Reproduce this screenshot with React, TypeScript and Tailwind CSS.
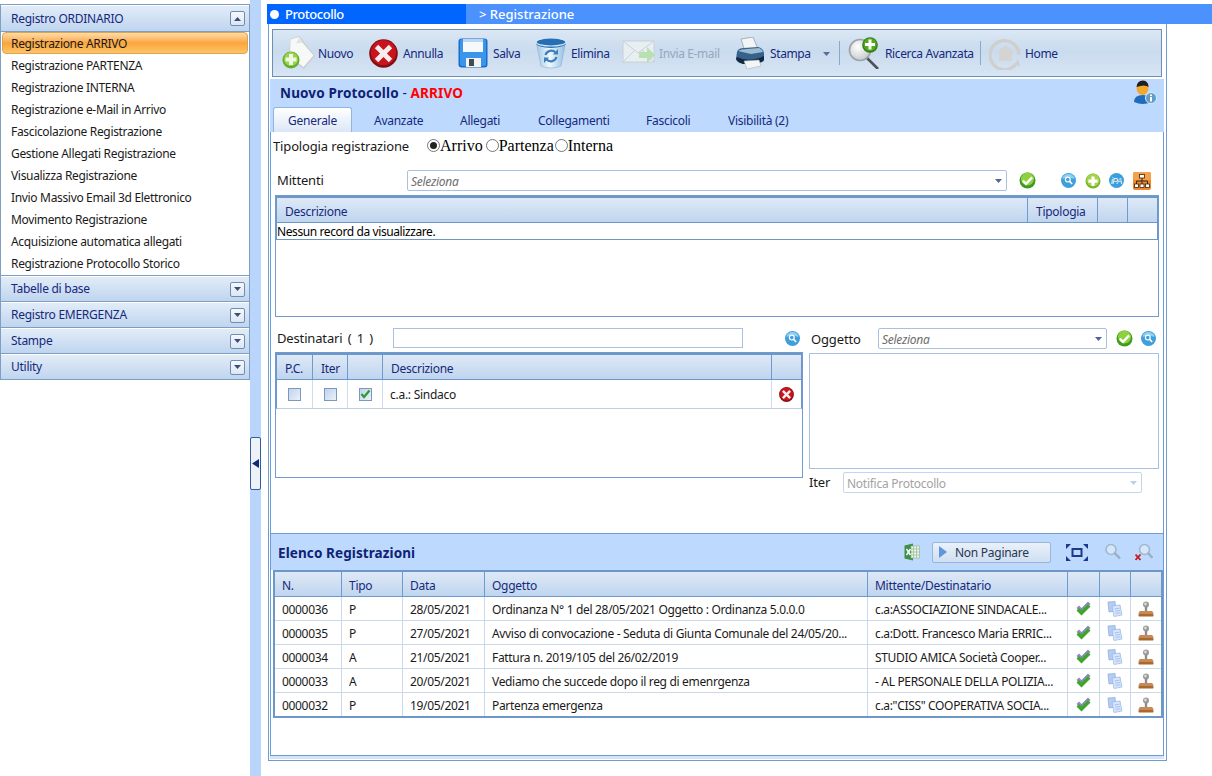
import React from "react";

const NAVY = "text-[#15297c]";
const LABEL = "text-[13px] tracking-[-0.15px] text-[#1a1a1a]";

function Caret({ up = false, color = "#4a5a90", small = false }: { up?: boolean; color?: string; small?: boolean }) {
  return (
    <svg width={small ? 7 : 9} height={small ? 4 : 5} viewBox="0 0 9 5" className="shrink-0">
      <path d={up ? "M0 5 L4.5 0 L9 5Z" : "M0 0 H9 L4.5 5Z"} fill={color} />
    </svg>
  );
}

function NuovoIcon() {
  return (
    <svg width="34" height="34" viewBox="0 0 34 34">
      <path d="M9 3 L19 0 L23 6 L34 20 L23 33 L8 23Z" fill="#c9ced2" />
      <path d="M9.5 3.5 L18.5 1 L21.5 6.5 L32.5 19.5 L22.5 31 L9 21Z" fill="#f7f8f8" />
      <path d="M18.5 1 L21.5 6.5 L15 7.5Z" fill="#dfe3e6" />
      <circle cx="10" cy="24" r="8.5" fill="#5fae28" />
      <circle cx="10" cy="23" r="7" fill="#98d24c" />
      <path d="M8 18 h4 v3.5 h3.5 v4 h-3.5 v3.5 h-4 v-3.5 h-3.5 v-4 h3.5z" fill="#eef8e2" />
    </svg>
  );
}
function CancelIcon({ size = 29 }: { size?: number }) {
  return (
    <svg width={size} height={size} viewBox="0 0 30 30">
      <circle cx="15" cy="15" r="14.8" fill="#850e14" />
      <circle cx="15" cy="14" r="13" fill="#c8141c" />
      <path d="M9.5 6 L15 11.5 L20.5 6 L24 9.5 L18.5 15 L24 20.5 L20.5 24 L15 18.5 L9.5 24 L6 20.5 L11.5 15 L6 9.5Z" fill="#f6eeee" />
    </svg>
  );
}
function SaveIcon() {
  return (
    <svg width="30" height="30" viewBox="0 0 30 30">
      <rect x="0.5" y="0.5" width="29" height="29" rx="3" fill="#1a6cc9" />
      <rect x="2" y="1" width="26" height="27" rx="2" fill="#3b95ea" />
      <rect x="5" y="1" width="20" height="13" fill="#f6f9fc" />
      <rect x="5" y="1" width="20" height="3" fill="#bcd6ef" />
      <rect x="8" y="20" width="15" height="9" fill="#f3f4f5" />
      <rect x="11" y="21" width="5" height="7" fill="#454b52" />
    </svg>
  );
}
function BinIcon() {
  return (
    <svg width="32" height="32" viewBox="0 0 32 32">
      <defs>
        <linearGradient id="binb" x1="0" x2="1" y1="0" y2="0">
          <stop offset="0" stopColor="#9cc6e8" />
          <stop offset="0.45" stopColor="#f2f8fc" />
          <stop offset="1" stopColor="#8dbde4" />
        </linearGradient>
      </defs>
      <path d="M1.5 6 L30.5 6 L26 29 Q16 33 6 29Z" fill="url(#binb)" stroke="#8fb6d4" strokeWidth="0.7" />
      <ellipse cx="16" cy="6" rx="15" ry="5" fill="#276fb4" />
      <ellipse cx="16" cy="5" rx="15" ry="4" fill="none" stroke="#d8e9f5" strokeWidth="1.2" />
      <path d="M10.5 18 A6 6 0 0 1 20.5 15.5 M21.5 20 A6 6 0 0 1 11.5 22.5" fill="none" stroke="#3a80be" strokeWidth="2.2" />
      <path d="M23 12 V17.5 H18Z M9 26 V20.5 H14Z" fill="#3a80be" />
    </svg>
  );
}
function MailIcon() {
  return (
    <svg width="34" height="26" viewBox="0 0 34 26">
      <rect x="1" y="1" width="31" height="21" fill="#e8eff3" stroke="#c8d0d3" />
      <path d="M1 1 L16 13 L32 1 M1 22 L13 10 M32 22 L20 10" fill="none" stroke="#c9d2d6" />
      <path d="M17 12 H25 V7 L33 15 L25 23 V18 H17Z" fill="#b8e0b0" />
    </svg>
  );
}
function PrinterIcon() {
  return (
    <svg width="30" height="32" viewBox="0 0 30 32">
      <path d="M6 2 L18 0 L23 12 L10 14Z" fill="#f2f4f6" stroke="#8d99a5" strokeWidth="0.7" />
      <path d="M2 15 Q3 11 9 11 L23 10 Q28 11 29 16 L29 23 Q28 26 22 26 L8 26 Q2 26 1 22Z" fill="#35618a" />
      <path d="M3 14 Q6 12 12 12 L24 11 Q27 12 28 15 L16 17Z" fill="#9dbcd2" />
      <path d="M2 20 Q14 26 29 19 L29 23 Q26 27 8 27 Q3 26 1 22Z" fill="#12293f" />
      <path d="M9 24 L24 23 L26 29 L12 32Z" fill="#f3f5f6" stroke="#aab3bb" strokeWidth="0.6" />
    </svg>
  );
}
function SearchPlusIcon() {
  return (
    <svg width="34" height="32" viewBox="0 0 34 32">
      <defs>
        <radialGradient id="lens" cx="0.4" cy="0.35" r="0.7">
          <stop offset="0" stopColor="#ffffff" />
          <stop offset="1" stopColor="#c4c8ca" />
        </radialGradient>
      </defs>
      <path d="M19 21 L30 32" stroke="#4c5257" strokeWidth="2.6" />
      <circle cx="12" cy="13" r="10.5" fill="url(#lens)" stroke="#9da3a7" strokeWidth="1.6" />
      <circle cx="22" cy="8" r="7.8" fill="#2e7d12" />
      <circle cx="22" cy="7.5" r="6.6" fill="#53a81f" />
      <path d="M20.5 2.5 h3 v3.5 h3.5 v3 h-3.5 v3.5 h-3 v-3.5 h-3.5 v-3 h3.5z" fill="#fff" />
    </svg>
  );
}
function HomeIcon() {
  return (
    <svg width="33" height="33" viewBox="0 0 33 33">
      <path d="M27 27 A14.5 14.5 0 1 1 30 18" fill="none" stroke="#cfcfcd" strokeWidth="3.4" />
      <path d="M25 28 L31 29 L29 22Z" fill="#cfcfcd" />
      <path d="M16.5 8 L26 16 H23 V24 H10 V16 H7Z" fill="#d4d4d2" />
    </svg>
  );
}
function UserInfoIcon() {
  return (
    <svg width="24" height="25" viewBox="0 0 24 25">
      <path d="M1 22 Q1 15 10 15 Q18 15 18 22 Q10 26 1 22Z" fill="#1f6bbd" />
      <ellipse cx="9.5" cy="8" rx="6" ry="7" fill="#f0a92c" />
      <path d="M3.5 7 Q4 0.5 10 0.5 Q15.5 1 15.5 7 Q12 4 3.5 7Z" fill="#202020" />
      <circle cx="18" cy="18" r="5.5" fill="#5f9ecb" stroke="#dfeaf3" />
      <rect x="17" y="17" width="2" height="4.5" fill="#fff" />
      <rect x="17" y="14.5" width="2" height="1.6" fill="#fff" />
    </svg>
  );
}
function OkIcon() {
  return (
    <svg width="17" height="17" viewBox="0 0 17 17">
      <circle cx="8.5" cy="8.5" r="8" fill="#3f9c1f" />
      <circle cx="8.5" cy="7" r="6.5" fill="#8ed13e" />
      <path d="M3.8 8.6 L7 11.8 L13.2 5.4" fill="none" stroke="#fff" strokeWidth="2.4" />
    </svg>
  );
}
function MiniSearch() {
  return (
    <svg width="15" height="15" viewBox="0 0 15 15">
      <circle cx="7.5" cy="7.5" r="7.5" fill="#3f9fdd" />
      <path d="M1.5 6 A6 5 0 0 1 13.5 6 Q7 3.5 1.5 6Z" fill="#8fd0f2" />
      <circle cx="6.8" cy="6.6" r="2.4" fill="#3f9fdd" stroke="#fff" strokeWidth="1.2" />
      <path d="M8.6 8.4 L11.2 11" stroke="#fff" strokeWidth="1.5" />
    </svg>
  );
}
function MiniAdd() {
  return (
    <svg width="16" height="16" viewBox="0 0 16 16">
      <circle cx="8" cy="8" r="7.5" fill="#7ab32b" />
      <circle cx="8" cy="7" r="6.5" fill="#a5d24c" />
      <path d="M6.4 3.5 h3.2 v3 h3 v3.2 h-3 v3 h-3.2 v-3 h-3 v-3.2 h3z" fill="#fff" />
    </svg>
  );
}
function MiniIpa() {
  return (
    <svg width="15" height="15" viewBox="0 0 15 15">
      <circle cx="7.5" cy="7.5" r="7.5" fill="#3b9fdc" />
      <text x="7.5" y="10.5" textAnchor="middle" fontSize="8.5" fontStyle="italic" letterSpacing="-0.5" fill="#fff" fontFamily="'Liberation Sans',sans-serif">iPA</text>
    </svg>
  );
}
function OrgIcon() {
  return (
    <svg width="18" height="18" viewBox="0 0 18 18">
      <rect width="18" height="18" rx="2" fill="#ef8a2c" />
      <rect width="18" height="8" rx="2" fill="#f5a04a" />
      <path d="M9 6 V9 M3.5 12 V9 H14.5 V12 M9 9 V12" fill="none" stroke="#3a2410" />
      <rect x="6.5" y="2.5" width="5" height="3.5" fill="#fff" stroke="#3a2410" strokeWidth="0.8" />
      <rect x="1.5" y="12" width="4" height="3.5" fill="#fff" stroke="#3a2410" strokeWidth="0.8" />
      <rect x="7" y="12" width="4" height="3.5" fill="#fff" stroke="#3a2410" strokeWidth="0.8" />
      <rect x="12.5" y="12" width="4" height="3.5" fill="#fff" stroke="#3a2410" strokeWidth="0.8" />
    </svg>
  );
}
function DoubleTick() {
  return (
    <svg width="15" height="15" viewBox="0 0 15 15">
      <path d="M0.5 7 L3 4.5 L5.5 7 L12 0.5 L14.5 3 L5.5 12Z" fill="#8b8bc2" />
      <path d="M0.5 9.5 L3 7 L5.5 9.5 L12 3 L14.5 5.5 L5.5 14.5Z" fill="#3fa52c" />
    </svg>
  );
}
function PagesIcon() {
  return (
    <svg width="16" height="16" viewBox="0 0 16 16">
      <path d="M1 1 L8 0.5 L9 10 L2 11Z" fill="#b5cdf4" stroke="#86a8e2" strokeWidth="0.7" />
      <path d="M5 5 L13 4 L15 14 L7 15.5Z" fill="#d8e5fb" stroke="#93b3e8" strokeWidth="0.7" />
      <path d="M7.5 8 L12.5 7.2 M8 10.3 L13 9.5 M8.4 12.5 L13.4 11.8" stroke="#9bb8ea" strokeWidth="0.8" />
    </svg>
  );
}
function StampIcon() {
  return (
    <svg width="16" height="16" viewBox="0 0 16 16">
      <circle cx="8" cy="3.5" r="3" fill="#9a9a9a" />
      <circle cx="7.5" cy="3" r="1.4" fill="#d6d6d6" />
      <rect x="6.8" y="5.5" width="2.4" height="4.5" fill="#8d8d8d" />
      <path d="M2 10 H14 Q15.5 11 15.5 13 H0.5 Q0.5 11 2 10Z" fill="#c88a52" />
      <rect x="0.5" y="13" width="15" height="2.5" rx="0.8" fill="#a9682f" />
    </svg>
  );
}
function ExcelIcon() {
  return (
    <svg width="16" height="18" viewBox="0 0 16 18">
      <path d="M0.5 2.5 L9 0.5 V17.5 L0.5 15.5Z" fill="#3f8f4a" />
      <rect x="7" y="3" width="8.5" height="12" fill="#e7f1e4" stroke="#8ab58c" strokeWidth="0.6" />
      <path d="M9.5 3 V15 M12.5 3 V15 M7 6 H15.5 M7 9 H15.5 M7 12 H15.5" stroke="#8ab58c" strokeWidth="0.6" />
      <path d="M2.5 6 L6.5 12 M6.5 6 L2.5 12" stroke="#fff" strokeWidth="1.4" />
    </svg>
  );
}
function FitIcon() {
  return (
    <svg width="22" height="17" viewBox="0 0 22 17">
      <rect x="6.5" y="5" width="9" height="7" fill="none" stroke="#1d3a8a" strokeWidth="2" />
      <path d="M0 5 V0 H5Z M22 5 V0 H17Z M0 12 V17 H5Z M22 12 V17 H17Z" fill="#1d3a8a" />
    </svg>
  );
}
function GreySearch({ x = false }: { x?: boolean }) {
  return (
    <svg width="18" height="18" viewBox="0 0 18 18">
      <circle cx={x ? 9.5 : 7} cy="6.5" r="5" fill="#d7e6f6" stroke="#9db8d2" strokeWidth="1.6" />
      <path d={x ? "M13 10 L17.5 15" : "M10.5 10 L16 15.5"} stroke="#96aec6" strokeWidth="2.4" />
      {x && <path d="M0.5 11.5 L5.5 17 M5.5 11.5 L0.5 17" stroke="#c8151d" strokeWidth="1.8" />}
    </svg>
  );
}

function Accordion({ label, up = false, tall = false }: { label: string; up?: boolean; tall?: boolean }) {
  return (
    <div
      className={`flex items-center justify-between pl-[10px] pr-[4px] border-b border-b-[#7f9fc2] border-t border-t-white bg-gradient-to-b from-[#e2ecf8] to-[#bfd5ef] ${
        tall ? "h-[27px]" : "h-[26px]"
      }`}
    >
      <span className={NAVY}>{label}</span>
      <span className="flex h-[15px] w-[15px] items-center justify-center rounded-[2px] border border-[#6f8db0] bg-gradient-to-b from-[#f6f9fd] to-[#dbe6f4]">
        <Caret up={up} color="#3d4f78" small />
      </span>
    </div>
  );
}

const menu = [
  "Registrazione ARRIVO",
  "Registrazione PARTENZA",
  "Registrazione INTERNA",
  "Registrazione e-Mail in Arrivo",
  "Fascicolazione Registrazione",
  "Gestione Allegati Registrazione",
  "Visualizza Registrazione",
  "Invio Massivo Email 3d Elettronico",
  "Movimento Registrazione",
  "Acquisizione automatica allegati",
  "Registrazione Protocollo Storico",
];

function Sidebar() {
  return (
    <aside className="w-[250px] shrink-0 pt-[4px]">
      <div className="border border-[#7f9fc2]">
        <Accordion label="Registro ORDINARIO" up tall />
        <div className="h-[244px] border-b border-[#7f9fc2] bg-white tracking-[-0.33px]">
          {menu.map((m, i) => (
            <div
              key={m}
              className={
                i === 0
                  ? "mx-[1px] flex h-[22px] items-center rounded-[4px] border border-[#dba64a] bg-gradient-to-b from-[#fddcaa] via-[#fba53a] to-[#fcc468] pl-[8px] pt-[2px] text-[#1a1a1a]"
                  : "flex h-[22px] items-center pl-[10px] pt-[2px] text-[#1a1a1a]"
              }
            >
              {m}
            </div>
          ))}
        </div>
        <Accordion label="Tabelle di base" />
        <Accordion label="Registro EMERGENZA" />
        <Accordion label="Stampe" />
        <div className="-mb-[1px]">
          <Accordion label="Utility" />
        </div>
      </div>
    </aside>
  );
}

function Splitter() {
  return (
    <div className="relative h-full w-[11px] shrink-0 bg-[#b9d5fc]">
      <div className="absolute left-0 top-[437px] flex h-[53px] w-[11px] items-center rounded-[2px] border border-[#2b5f9e] bg-[#eef2f8]">
        <svg width="7" height="9" viewBox="0 0 7 9" className="ml-[1px]">
          <path d="M7 0 V9 L0 4.5Z" fill="#0d2a78" />
        </svg>
      </div>
    </div>
  );
}

const tools = [
  { t: "Nuovo", w: "w-[85px]", i: <NuovoIcon /> },
  { t: "Annulla", w: "w-[90px]", i: <CancelIcon /> },
  { t: "Salva", w: "w-[78px]", i: <SaveIcon /> },
  { t: "Elimina", w: "w-[88px]", i: <BinIcon /> },
  { t: "Invia E-mail", w: "w-[111px]", i: <MailIcon />, off: true },
];

function Tool({ icon, text, off, w }: { icon: React.ReactNode; text: string; off?: boolean; w: string }) {
  return (
    <div className={`flex items-center ${w}`}>
      <span className="mr-[3px] flex w-[34px] justify-center">{icon}</span>
      <span className={`whitespace-nowrap pt-[2px] tracking-[-0.38px] ${off ? "text-[#98a6bd]" : NAVY}`}>{text}</span>
    </div>
  );
}

function Toolbar() {
  return (
    <div className="mx-[2px] mt-[5px] flex h-[48px] items-center border border-[#6e8fb5] bg-gradient-to-b from-[#dbe7f4] via-[#c9dbee] via-45% to-[#d7e5f4] pl-[8px]">
      {tools.map((t) => (
        <Tool key={t.t} icon={t.i} text={t.t} off={t.off} w={t.w} />
      ))}
      <div className="flex w-[106px] items-center">
        <span className="mr-[3px] flex w-[34px] justify-center">
          <PrinterIcon />
        </span>
        <span className={`pt-[2px] tracking-[-0.38px] ${NAVY}`}>Stampa</span>
        <span className="ml-[12px] pt-[2px]">
          <Caret color="#5a6a9c" small />
        </span>
      </div>
      <div className="mr-[8px] h-[24px] w-px bg-[#86a9cf]" />
      <Tool icon={<SearchPlusIcon />} text="Ricerca Avanzata" w="w-[132px]" />
      <div className="mr-[7px] h-[24px] w-px bg-[#86a9cf]" />
      <Tool icon={<HomeIcon />} text="Home" w="w-[80px]" />
    </div>
  );
}

const tabs = [
  { t: "Avanzate", w: "w-[86px]" },
  { t: "Allegati", w: "w-[78px]" },
  { t: "Collegamenti", w: "w-[108px]" },
  { t: "Fascicoli", w: "w-[82px]" },
  { t: "Visibilità (2)", w: "w-[100px]" },
];

function PanelHead() {
  return (
    <div className="mt-[2px] h-[53px] bg-[#bed9fe]">
      <div className="flex h-[28px] items-center justify-between pl-[10px] pr-[7px]">
        <h1 className="text-[13.5px] font-bold tracking-[0.15px] text-[#0f2274]">
          Nuovo Protocollo <span className="font-normal">-</span> <span className="text-[#ff0000]">ARRIVO</span>
        </h1>
        <span className="-mt-[2px]">
          <UserInfoIcon />
        </span>
      </div>
      <div className="flex h-[25px] pl-[3px]">
        <div className={`mr-[7px] flex h-[25px] w-[79px] items-center justify-center rounded-t-[3px] border-x border-t border-[#92b4de] bg-gradient-to-b from-[#ffffff] to-[#dbe7f6] pt-[2px] ${NAVY}`}>
          Generale
        </div>
        {tabs.map((t) => (
          <div key={t.t} className={`flex h-[25px] items-center whitespace-nowrap pl-[15px] pt-[2px] ${t.w} ${NAVY}`}>
            {t.t}
          </div>
        ))}
      </div>
    </div>
  );
}

function Radio({ on = false, label, cls = "" }: { on?: boolean; label: string; cls?: string }) {
  return (
    <span className={`flex items-center ${cls}`}>
      <span className="flex h-[13px] w-[13px] items-center justify-center rounded-full border border-[#767676] bg-white">
        {on && <span className="h-[7px] w-[7px] rounded-full bg-[#222]" />}
      </span>
      <span className="font-['Liberation_Serif',serif] text-[16px] leading-[18px] tracking-normal text-black">{label}</span>
    </span>
  );
}

function Combo({ w, text, off }: { w: string; text: string; off?: boolean }) {
  return (
    <div className={`flex h-[21px] items-center justify-between rounded-[2px] border bg-white pl-[3px] pr-[4px] ${off ? "border-[#c6d6ea]" : "border-[#a9c1e0]"} ${w}`}>
      <span className={`pt-[2px] ${off ? "text-[#a3a3a3]" : "italic text-[#6d6d6d]"}`}>{text}</span>
      <Caret color={off ? "#bfcfe3" : "#5363a0"} small />
    </div>
  );
}

function Hd({ children, cls = "" }: { children?: React.ReactNode; cls?: string }) {
  return <div className={`flex items-center border-r border-[#6d9ad0] pl-[8px] pt-[3px] ${NAVY} ${cls}`}>{children}</div>;
}

function MittentiTable() {
  return (
    <div className="mx-[4px] mt-[4px] h-[122px] border border-[#6f9bd0]">
      <div className="grid h-[27px] grid-cols-[751px_70px_30px_31px] border-x border-t-2 border-b border-[#6d96c9] bg-gradient-to-b from-[#dfe9f6] to-[#bfd5ef]">
        <Hd>Descrizione</Hd>
        <Hd>Tipologia</Hd>
        <Hd />
        <Hd cls="border-r-0" />
      </div>
      <div className="flex h-[17px] items-center border-x border-b border-[#6d96c9] pt-[2px] tracking-[-0.4px] text-black">
        Nessun record da visualizzare.
      </div>
    </div>
  );
}

function Box({ checked = false }: { checked?: boolean }) {
  return (
    <span className="flex h-[13px] w-[13px] items-center justify-center border border-[#7c98bd] bg-gradient-to-br from-[#c0d3ec] to-[#eaf1fa]">
      {checked && (
        <svg width="11" height="10" viewBox="0 0 11 10">
          <path d="M1.5 5 L4 8 L9.5 1.5" fill="none" stroke="#2f9a2c" strokeWidth="2.2" />
        </svg>
      )}
    </span>
  );
}

function DestinatariTable() {
  return (
    <div className="mt-[4px] h-[126px] border border-[#6f9bd0]">
      <div className="grid h-[27px] grid-cols-[36px_35px_35px_389px_1fr] border-x border-t-2 border-b border-[#6d96c9] bg-gradient-to-b from-[#dfe9f6] to-[#bfd5ef]">
        <Hd>P.C.</Hd>
        <Hd>Iter</Hd>
        <Hd />
        <Hd>Descrizione</Hd>
        <Hd cls="border-r-0" />
      </div>
      <div className="grid h-[29px] grid-cols-[36px_35px_35px_389px_1fr] border-x border-b border-[#6d96c9] border-b-[#c0cfe2]">
        <div className="flex items-center justify-center border-r border-[#d0dbe9]"><Box /></div>
        <div className="flex items-center justify-center border-r border-[#d0dbe9]"><Box /></div>
        <div className="flex items-center justify-center border-r border-[#d0dbe9]"><Box checked /></div>
        <div className="flex items-center border-r border-[#d0dbe9] pl-[7px] pt-[2px] text-[#1a1a1a]">c.a.: Sindaco</div>
        <div className="flex items-center justify-center"><CancelIcon size={15} /></div>
      </div>
    </div>
  );
}

function TabBody() {
  return (
    <div className="h-[402px] border-x border-b border-[#6f9bd0] bg-white">
      <div className="mt-[1px] flex h-[24px] items-center pl-[2px] pt-[1px]">
        <span className={`w-[154px] ${LABEL}`}>Tipologia registrazione</span>
        <Radio on label="Arrivo" />
        <Radio label="Partenza" cls="ml-[3px]" />
        <Radio label="Interna" cls="ml-[1px]" />
      </div>
      <div className="mt-[13px] flex h-[21px] items-center pl-[6px]">
        <span className={`-mt-[1px] w-[130px] ${LABEL}`}>Mittenti</span>
        <Combo w="w-[600px]" text="Seleziona" />
        <span className="ml-[12px]"><OkIcon /></span>
        <span className="ml-[25px]"><MiniSearch /></span>
        <span className="ml-[9px]"><MiniAdd /></span>
        <span className="ml-[8px]"><MiniIpa /></span>
        <span className="ml-[9px]"><OrgIcon /></span>
      </div>
      <MittentiTable />
      <div className="mt-[11px] flex pl-[4px]">
        <div className="w-[528px]">
          <div className="flex h-[20px] items-center">
            <span className={`ml-[2px] w-[116px] [word-spacing:2px] ${LABEL}`}>Destinatari ( 1 )</span>
            <div className="h-[20px] w-[350px] border border-[#a9c1e0] bg-white" />
            <span className="ml-[42px]"><MiniSearch /></span>
          </div>
          <DestinatariTable />
        </div>
        <div className="ml-[6px] w-[350px]">
          <div className="flex h-[21px] items-center">
            <span className={`ml-[2px] w-[67px] ${LABEL}`}>Oggetto</span>
            <Combo w="w-[229px]" text="Seleziona" />
            <span className="ml-[9px]"><OkIcon /></span>
            <span className="ml-[8px]"><MiniSearch /></span>
          </div>
          <div className="mt-[4px] h-[116px] border border-[#a9c1e0] bg-white" />
          <div className="mt-[3px] flex items-center">
            <span className={`w-[34px] -mt-[2px] ${LABEL}`}>Iter</span>
            <Combo w="w-[299px]" text="Notifica Protocollo" off />
          </div>
        </div>
      </div>
    </div>
  );
}

const rows = [
  ["0000036", "P", "28/05/2021", "Ordinanza N° 1 del 28/05/2021 Oggetto : Ordinanza 5.0.0.0", "c.a:ASSOCIAZIONE SINDACALE..."],
  ["0000035", "P", "27/05/2021", "Avviso di convocazione - Seduta di Giunta Comunale del 24/05/20...", "c.a:Dott. Francesco Maria ERRIC..."],
  ["0000034", "A", "21/05/2021", "Fattura n. 2019/105 del 26/02/2019", "STUDIO AMICA Società Cooper..."],
  ["0000033", "A", "20/05/2021", "Vediamo che succede dopo il reg di emenrgenza", "- AL PERSONALE DELLA POLIZIA..."],
  ["0000032", "P", "19/05/2021", "Partenza emergenza", "c.a:\"CISS\" COOPERATIVA SOCIA..."],
];

const GRID = "grid grid-cols-[67px_61px_82px_383px_200px_32px_31px_30px]";

function Elenco() {
  return (
    <div className="flex-1 border-x border-b border-[#6f9bd0] bg-white">
      <div className="flex h-[36px] items-center bg-[#bed9fe] pl-[7px]">
        <h2 className="w-[626px] pt-[1px] text-[13.5px] font-bold tracking-[0.1px] text-[#0f2274]">Elenco Registrazioni</h2>
        <ExcelIcon />
        <button className={`ml-[12px] flex h-[21px] w-[119px] items-center rounded-[2px] border border-[#9ab5d8] bg-gradient-to-b from-[#e9f1fa] to-[#cfdff2] pl-[6px] ${NAVY}`}>
          <svg width="8" height="12" viewBox="0 0 8 12" className="mr-[8px]">
            <path d="M0 0 L8 6 L0 12Z" fill="#5f95dc" />
          </svg>
          <span className="pt-[1px] text-[#2a3650]">Non Paginare</span>
        </button>
        <span className="ml-[15px]"><FitIcon /></span>
        <span className="ml-[16px]"><GreySearch /></span>
        <span className="ml-[13px]"><GreySearch x /></span>
      </div>
      <div className="ml-[2px] border-2 border-[#6d96c9]">
        <div className={`${GRID} h-[25px] border-b border-[#6d9ad0] bg-gradient-to-b from-[#dfe9f6] to-[#bfd5ef]`}>
          {["N.", "Tipo", "Data", "Oggetto", "Mittente/Destinatario", "", "", ""].map((h, i) => (
            <div key={i} className={`flex items-center pl-[7px] pt-[3px] ${NAVY} ${i < 7 ? "border-r border-[#6d9ad0]" : ""}`}>
              {h}
            </div>
          ))}
        </div>
        {rows.map((r) => (
          <div key={r[0]} className={`${GRID} h-[24px] border-b border-[#cad8ea] tracking-[-0.33px] last:h-[23px] last:border-b-0`}>
            {r.map((c, i) => (
              <div key={i} className="flex items-center overflow-hidden whitespace-nowrap border-r border-[#cad8ea] pl-[7px] pt-[3px] text-[#1a1a1a]">
                {c}
              </div>
            ))}
            <div className="flex items-center justify-center border-r border-[#cad8ea]"><DoubleTick /></div>
            <div className="flex items-center justify-center border-r border-[#cad8ea]"><PagesIcon /></div>
            <div className="flex items-center justify-center"><StampIcon /></div>
          </div>
        ))}
      </div>
    </div>
  );
}

export default function App() {
  return (
    <div className="flex h-[776px] w-[1212px] overflow-hidden bg-white font-['Noto_Sans',sans-serif] text-[12px] leading-[16px] tracking-[-0.27px]">
      <Sidebar />
      <Splitter />
      <main className="ml-[6px] flex-1 pt-[4px]">
        <div className="flex h-[20px] items-center bg-[#4b92ff] text-[13px] font-medium text-white">
          <div className="flex h-[20px] w-[199px] items-center bg-[#0066ff] pl-[3px]">
            <span className="mr-[6px] h-[9px] w-[9px] rounded-full bg-white" />
            <span className="tracking-[-0.45px]">Protocollo</span>
          </div>
          <span className="ml-[13px] tracking-[0px]">&gt; Registrazione</span>
        </div>
        <div className="ml-[1px] flex h-[737px] w-[899px] flex-col border border-t-0 border-[#6f9bd0] pl-[1px] pr-[2px]">
          <Toolbar />
          <PanelHead />
          <TabBody />
          <Elenco />
          <div className="mb-[1px] h-[3px] shrink-0 bg-[#d3e4fb]" />
        </div>
      </main>
    </div>
  );
}
